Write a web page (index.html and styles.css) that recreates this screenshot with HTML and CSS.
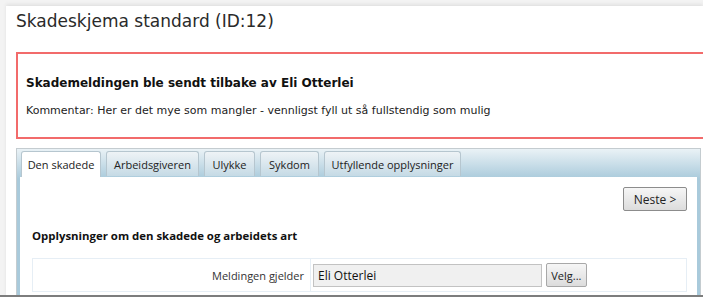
FILE: index.html
```html
<!DOCTYPE html>
<html lang="no">
<head>
  <meta charset="UTF-8">
  <title>Skadeskjema standard</title>
  <link rel="stylesheet" href="styles.css">
</head>
<body>
  <div class="page">
    <h1 class="page-title">Skadeskjema standard (ID:12)</h1>

    <div class="return-box">
      <p class="return-title">Skademeldingen ble sendt tilbake av Eli Otterlei</p>
      <p class="return-comment">Kommentar: Her er det mye som mangler - vennligst fyll ut så fullstendig som mulig</p>
    </div>

    <div class="tab-panel">
      <ul class="tab-list">
        <li class="tab active">Den skadede</li>
        <li class="tab">Arbeidsgiveren</li>
        <li class="tab">Ulykke</li>
        <li class="tab">Sykdom</li>
        <li class="tab">Utfyllende opplysninger</li>
      </ul>
      <div class="tab-content">
        <div class="toolbar">
          <button class="btn next-btn">Neste &gt;</button>
        </div>
        <h2 class="section-title">Opplysninger om den skadede og arbeidets art</h2>
        <table class="form-table">
          <tr>
            <td class="label-cell">Meldingen gjelder</td>
            <td class="field-cell">
              <input type="text" class="text-input" value="Eli Otterlei" readonly>
              <button class="btn pick-btn">Velg...</button>
            </td>
          </tr>
        </table>
      </div>
    </div>
  </div>
  <div class="bottom-edge"></div>
</body>
</html>
```

FILE: styles.css
```css
html, body {
  margin: 0;
  padding: 0;
  height: 297px;
  overflow: hidden;
}
* {
  box-sizing: border-box;
}
body {
  background: #f3f3f3;
  font-family: "DejaVu Sans", Verdana, sans-serif;
  color: #222;
  position: relative;
}
.page {
  margin: 6px 0 0 6px;
  background: #fff;
  padding: 5px 0 0 10px;
  height: 291px;
  overflow: hidden;
  box-shadow: 0 -2px 3px #e2e2e2;
}
.page-title {
  margin: 0;
  font-size: 17px;
  font-weight: normal;
  color: #2a2a2a;
  line-height: 20px;
}
.return-box {
  margin-top: 21px;
  border: 2px solid #f26b6b;
  border-right: none;
  height: 87px;
  padding: 0 0 0 8px;
  font-size: 12px;
}
.return-title {
  margin: 22px 0 0;
  font-weight: bold;
  color: #111;
}
.return-comment {
  margin: 14px 0 0;
  font-size: 11px;
  color: #222;
}
.tab-panel {
  margin-top: 9px;
  margin-right: 2px;
  border: 1px solid #c4ccd0;
  background: linear-gradient(#eaf2f6, #a9cadb 30px, #a9cadb);
  padding: 2px 3px 0 3px;
  height: 160px;
}
.tab-list {
  list-style: none;
  margin: 0;
  padding: 0 0 0 1px;
  display: flex;
  gap: 5px;
  font-family: "Open Sans", "Noto Sans", sans-serif;
  font-size: 11px;
}
.tab {
  flex-shrink: 0;
  white-space: nowrap;
  text-align: center;
  height: 25px;
  line-height: 25px;
  border: 1px solid #b6c6cf;
  border-bottom: none;
  border-radius: 3px 3px 0 0;
  background: linear-gradient(#eef3f6, #c5dae5);
  color: #222;
}
.tab.active {
  background: #fff;
  height: 26px;
}
.tab:nth-child(1) { width: 80px; }
.tab:nth-child(2) { width: 93px; }
.tab:nth-child(3) { width: 51px; }
.tab:nth-child(4) { width: 59px; }
.tab:nth-child(5) { width: 137px; }
.tab-content {
  background: #fff;
  height: 130px;
  padding: 10px 10px 0 12px;
}
.toolbar {
  display: flex;
  justify-content: flex-end;
}
.btn {
  font-family: "Open Sans", "Noto Sans", sans-serif;
  color: #222;
  border: 1px solid #8c8c8c;
  border-radius: 2px;
  background: linear-gradient(#f6f6f6, #dcdcdc);
  padding: 0;
}
.next-btn {
  width: 64px;
  height: 24px;
  font-size: 12px;
}
.section-title {
  margin: 17px 0 0;
  font-family: "Open Sans", "Noto Sans", sans-serif;
  font-size: 11.4px;
  font-weight: bold;
  color: #111;
}
.form-table {
  margin-top: 15px;
  width: 655px;
  border-collapse: collapse;
  font-family: "Open Sans", "Noto Sans", sans-serif;
  font-size: 11px;
}
.form-table td {
  border: 1px solid #e6eef5;
  height: 33px;
  padding: 0;
}
.label-cell {
  width: 278px;
  text-align: right;
  padding-right: 6px !important;
  color: #333;
}
.field-cell {
  padding-left: 2px !important;
}
.text-input {
  width: 229px;
  height: 23px;
  border: 1px solid #c2c2c2;
  background: #f0f0f0;
  font-family: "Open Sans", "Noto Sans", sans-serif;
  font-size: 12px;
  padding: 0 4px;
  color: #111;
  vertical-align: middle;
}
.pick-btn {
  width: 41px;
  height: 24px;
  font-size: 11px;
  margin-left: 1px;
  vertical-align: middle;
  border-color: #a8a8a8;
}
.bottom-edge {
  position: absolute;
  left: 0;
  right: 0;
  top: 295px;
  height: 2px;
  background: #7d7d7d;
}
```
